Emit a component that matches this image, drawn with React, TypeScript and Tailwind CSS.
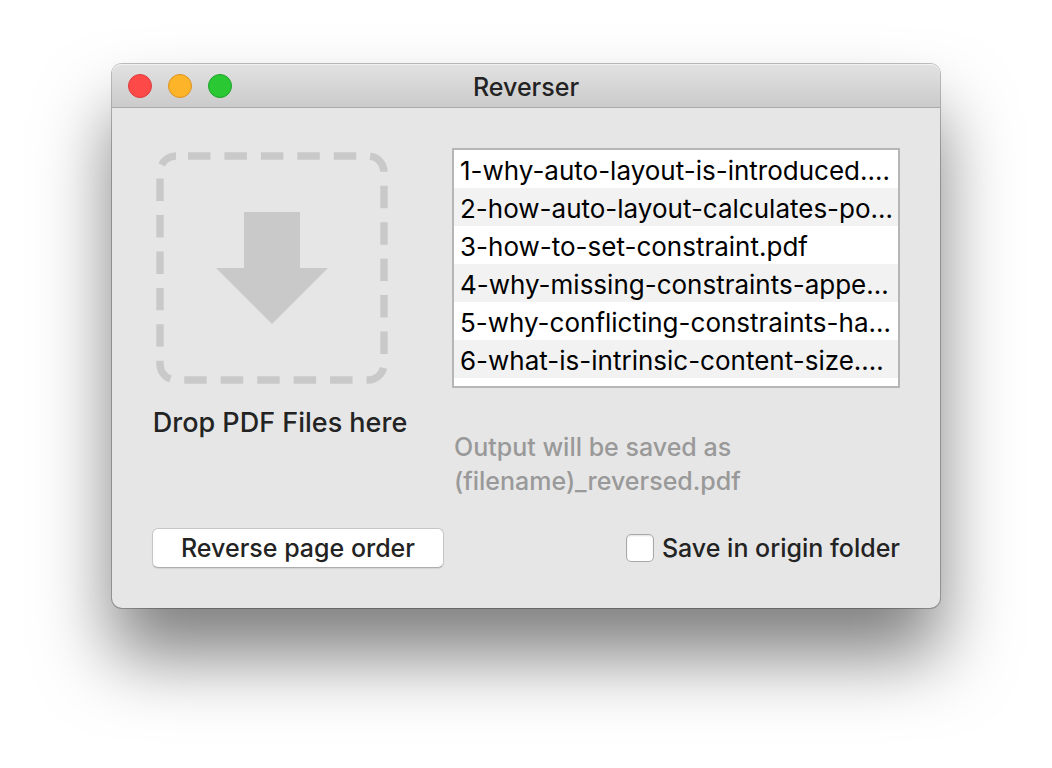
import { useState } from "react";

const files = [
  "1-why-auto-layout-is-introduced.…",
  "2-how-auto-layout-calculates-po…",
  "3-how-to-set-constraint.pdf",
  "4-why-missing-constraints-appe…",
  "5-why-conflicting-constraints-ha…",
  "6-what-is-intrinsic-content-size.…",
];

function TitleBar() {
  return (
    <header className="grid h-11 grid-cols-[1fr_auto_1fr] items-center rounded-t-[9px] border-b border-[#a9a9a9] bg-linear-to-b from-[#e2e2e2] to-[#cbcbcb] px-4 shadow-[inset_0_1px_0_#f2f2f2]">
      <div className="flex gap-4">
        <button aria-label="Close" className="size-6 rounded-full border border-[#df3a3e] bg-[#fd4a49]" />
        <button aria-label="Minimize" className="size-6 rounded-full border border-[#dc9220] bg-[#fdb429]" />
        <button aria-label="Zoom" className="size-6 rounded-full border border-[#1fa129] bg-[#2ac833]" />
      </div>
      <h1 className="pt-0.5 text-[25px] leading-8 font-[450]">Reverser</h1>
    </header>
  );
}

function DropZone() {
  return (
    <section className="flex flex-col items-center">
      <svg viewBox="0 0 232 232" className="mt-1 mr-4 ml-1 size-58 self-start" fill="none" aria-hidden="true">
        <path
          d="M32 4H212A16 16 0 0 1 228 20V212A16 16 0 0 1 212 228H20A16 16 0 0 1 4 212V20A16 16 0 0 1 20 4"
          stroke="#c9c9c9"
          strokeWidth="7.4"
          strokeDasharray="22.45 14"
        />
        <path d="M88 60H144V116H172L116 172L60 116H88Z" fill="#c9c9c9" />
      </svg>
      <p className="mt-5 text-[27px] leading-[38px] whitespace-nowrap">Drop PDF Files here</p>
    </section>
  );
}

function FileList() {
  return (
    <ul className="h-60 overflow-hidden border-2 border-[#b6b6b6] bg-white text-[26px] text-black">
      {files.map((file) => (
        <li key={file} className="h-[38px] overflow-hidden px-1.5 leading-[42px] font-normal whitespace-nowrap even:bg-[#f2f2f2]">
          {file}
        </li>
      ))}
    </ul>
  );
}

export default function App() {
  const [saveInOrigin, setSaveInOrigin] = useState(false);

  return (
    <div className="min-h-screen bg-white px-6 pt-16 pb-40 font-['Inter','Liberation_Sans',sans-serif] font-[450] text-[#232323]">
      <main className="mx-auto max-w-[828px] rounded-[10px] bg-[#e6e6e6] shadow-[0_0_0_1px_rgba(0,0,0,0.25),0_48px_72px_rgba(0,0,0,0.5)]">
        <TitleBar />
        <div className="px-10 pt-10 pb-10">
          <div className="grid grid-cols-[256px_minmax(0,1fr)] gap-x-11">
            <DropZone />
            <section>
              <FileList />
              <p className="mt-[42px] pl-0.5 text-[25px] leading-[34px] text-[#999999]">
                Output will be saved as
                <br />
                (filename)_reversed.pdf
              </p>
            </section>
          </div>
          <div className="mt-[30px] flex items-center justify-between">
            <button className="h-10 w-[292px] rounded-md border border-[#c6c6c6] border-b-[#adadad] bg-white text-[25px] leading-9 shadow-[0_1px_1px_rgba(0,0,0,0.08)]">
              Reverse page order
            </button>
            <label className="flex items-center gap-2 text-[25px] leading-9">
              <input
                type="checkbox"
                checked={saveInOrigin}
                onChange={(e) => setSaveInOrigin(e.target.checked)}
                className="size-7 appearance-none rounded-[5px] border border-[#a9a9a9] bg-white shadow-[inset_0_1px_2px_rgba(0,0,0,0.12)] checked:bg-[#3b8cf7]"
              />
              Save in origin folder
            </label>
          </div>
        </div>
      </main>
    </div>
  );
}
